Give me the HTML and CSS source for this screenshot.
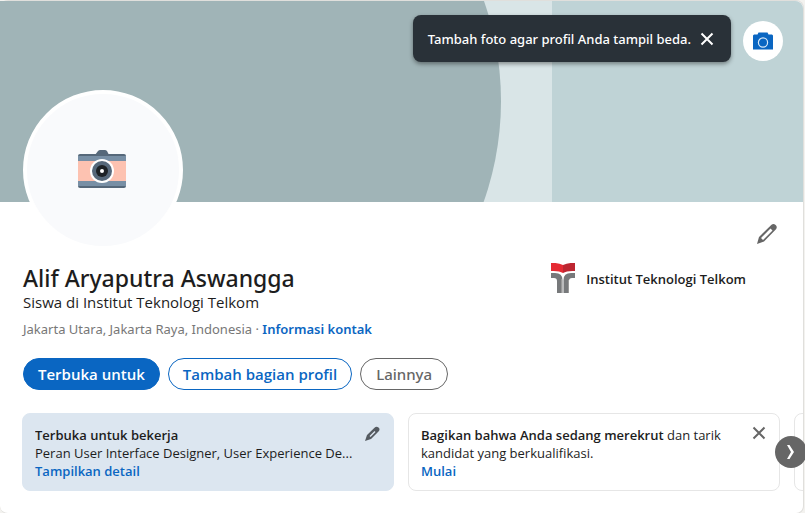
FILE: index.html
```html
<!DOCTYPE html>
<html lang="id">
<head>
<meta charset="utf-8">
<meta name="viewport" content="width=device-width, initial-scale=1">
<title>Alif Aryaputra Aswangga</title>
<link rel="stylesheet" href="styles.css">
</head>
<body>
<main class="card">
  <header class="cover">
    <svg class="cover-art" viewBox="0 0 803 201" preserveAspectRatio="xMidYMid slice" aria-hidden="true">
      <rect width="803" height="201" fill="#d9e5e7"/>
      <rect x="552" width="1000" height="201" fill="#bfd3d6"/>
      <circle cx="199" cy="100" r="302" fill="#a0b4b7"/>
      <rect x="-500" width="600" height="201" fill="#a0b4b7"/>
    </svg>
    <div class="cover-tools">
      <div class="tip" role="status">
        <span>Tambah foto agar profil Anda tampil beda.</span>
        <button class="icon-button" type="button" aria-label="Tutup">
          <svg width="14" height="14" viewBox="0 0 14 14"><path d="M1.5 1.5l11 11M12.5 1.5l-11 11" stroke="#fff" stroke-width="2" fill="none"/></svg>
        </button>
      </div>
      <button class="photo-button" type="button" aria-label="Ubah foto sampul">
        <svg width="20" height="18" viewBox="0 0 20 18"><path d="M0 3.500L1 2.500h3.500L5.500.5h9l1 2H19l1 1V17.500H0z" fill="#0a66c2"/><circle cx="10" cy="10.500" r="4.600" fill="none" stroke="#d8e8f7" stroke-width="1.200"/></svg>
      </button>
    </div>
  </header>

  <section class="profile">
    <div class="top-row">
      <button class="avatar" type="button" aria-label="Tambah foto profil">
        <svg width="48" height="38" viewBox="0 0 48 38">
          <path d="M17 5l3-4q1-1 2-1h5q1 0 2 1l2 4z" fill="#56687a"/>
          <rect y="4" width="48" height="34" rx="2" fill="#56687a"/>
          <rect y="6" width="48" height="30" fill="#788fa5"/>
          <rect y="11" width="48" height="20" fill="#fdc2b1"/>
          <circle cx="24" cy="21" r="12" fill="#fff"/>
          <circle cx="24" cy="21" r="10" fill="#56687a"/>
          <circle cx="24" cy="21" r="6" fill="#1d2226"/>
          <circle cx="24" cy="21" r="2" fill="#fff"/>
        </svg>
      </button>
      <button class="icon-button edit" type="button" aria-label="Edit profil">
        <svg width="22" height="22" viewBox="0 0 22 22"><path fill-rule="evenodd" d="M1 21L3 14 15.500 1.800Q17.500 0 19.600 2T20 6.200L8 18.500ZM5 15L14.500 5.500l2 2L7 17Z" fill="#666"/></svg>
      </button>
    </div>

    <div class="identity">
      <div class="person">
        <h1>Alif Aryaputra Aswangga</h1>
        <p class="headline">Siswa di Institut Teknologi Telkom</p>
        <p class="place">Jakarta Utara, Jakarta Raya, Indonesia · <a href="#kontak">Informasi kontak</a></p>
      </div>
      <a class="school" href="#sekolah">
        <svg width="24" height="31" viewBox="0 0 24 31" aria-hidden="true">
          <path d="M0 0Q7-.5 12 2v8Q8 7.500 0 8z" fill="#e52a33"/>
          <path d="M24 0Q17-.5 12 2v8Q16 7.500 24 8z" fill="#bd2631"/>
          <path d="M0 10h4q7.500 0 7.500 7V30H6V18q0-3-3-3H0z" fill="#77797b"/>
          <path d="M24 10h-4q-7.500 0-7.500 7V30H18V18q0-3 3-3h3z" fill="#77797b"/>
          <path d="M10.500 16v14M17.500 17v13" stroke="#999" stroke-width="1"/>
        </svg>
        <span>Institut Teknologi Telkom</span>
      </a>
    </div>

    <div class="actions">
      <button class="pill primary" type="button">Terbuka untuk</button>
      <button class="pill outline" type="button">Tambah bagian profil</button>
      <button class="pill muted" type="button">Lainnya</button>
    </div>
  </section>

  <section class="carousel">
    <div class="track">
      <article class="promo active">
        <div class="promo-text">
          <p class="clip"><strong>Terbuka untuk bekerja</strong></p>
          <p class="clip">Peran User Interface Designer, User Experience De...</p>
          <a href="#detail">Tampilkan detail</a>
        </div>
        <button class="icon-button" type="button" aria-label="Edit preferensi">
          <svg width="16" height="16" viewBox="0 0 16 16"><path fill-rule="evenodd" d="M1 15L3 9 10.500 1.700Q12.500 0 14.500 1.600T14.500 5.500L7 13ZM5.500 10L10.500 5l1 1L6.500 11Z" fill="#555b61"/></svg>
        </button>
      </article>
      <article class="promo">
        <div class="promo-text">
          <p><strong>Bagikan bahwa Anda sedang merekrut</strong> dan tarik kandidat yang berkualifikasi.</p>
          <a href="#mulai">Mulai</a>
        </div>
        <button class="icon-button" type="button" aria-label="Tutup">
          <svg width="14" height="14" viewBox="0 0 14 14"><path d="M1.500 1.500l11 11M12.500 1.500l-11 11" stroke="#666" stroke-width="2" fill="none"/></svg>
        </button>
      </article>
      <article class="promo"></article>
    </div>
    <button class="next" type="button" aria-label="Berikutnya">
      <svg width="8" height="14" viewBox="0 0 8 14"><path d="M0 0h2.500L7 7l-4.500 7H0l4-7z" fill="#fff"/></svg>
    </button>
  </section>
</main>
</body>
</html>
```
FILE: styles.css
```css
* { box-sizing: border-box; }
body {
  margin: 0;
  background: #f3f2ef;
  color: #1d1d1d;
  font: 13px/18px "Open Sans", "Noto Sans", sans-serif;
  overflow-x: hidden;
}
h1, p { margin: 0; }
button { font: inherit; cursor: pointer; }
a { color: #0a66c2; font-weight: 600; text-decoration: none; }
strong { font-weight: 600; }
svg { display: block; flex: none; }
.card {
  margin-right: 1px;
  padding-bottom: 22px;
  background: #fff;
  border: 1px solid #e0dfdc;
  border-left: 0;
  border-radius: 8px;
}
.cover {
  position: relative;
  height: 201px;
  border-radius: 0 8px 0 0;
  overflow: hidden;
}
.cover-art { position: absolute; inset: 0; width: 100%; height: 100%; }
.cover-tools {
  position: relative;
  display: flex;
  justify-content: flex-end;
  gap: 12px;
  padding: 14px 20px 0 0;
}
.tip {
  display: flex;
  align-items: center;
  gap: 9px;
  height: 47px;
  padding: 0 17px 0 15px;
  border-radius: 8px;
  background: #293138;
  color: #fff;
  font-family: "Noto Sans", "Open Sans", sans-serif;
  font-weight: 500;
  box-shadow: 0 2px 4px rgba(0, 0, 0, .4);
}
.icon-button { display: flex; flex: none; padding: 0; border: 0; background: none; }
.photo-button {
  display: flex;
  align-items: center;
  justify-content: center;
  width: 40px;
  height: 40px;
  margin-top: 6px;
  padding: 0;
  border: 0;
  border-radius: 50%;
  background: #fff;
}
.profile { padding: 0 25px 0 23px; }
.top-row { display: flex; justify-content: space-between; }
.avatar {
  position: relative;
  display: flex;
  align-items: center;
  justify-content: center;
  width: 160px;
  height: 160px;
  margin-top: -112px;
  padding: 0 2px 2px 0;
  border: 4px solid #fff;
  border-radius: 50%;
  background: #f9fafc;
}
.edit { margin-top: 21px; height: 22px; }
.identity { display: flex; justify-content: space-between; padding-top: 13px; }
h1 {
  font: 500 23px/30px "Noto Sans", "Open Sans", sans-serif;
}
.headline { font-size: 15px; line-height: 18px; }
.place {
  margin-top: 9px;
  color: #777;
  font-family: "Noto Sans", "Open Sans", sans-serif;
}
.school {
  display: flex;
  align-items: center;
  align-self: flex-start;
  gap: 11px;
  margin-right: 32px;
  color: #1d1d1d;
}
.actions { display: flex; gap: 8px; padding-top: 20px; }
.pill {
  height: 32px;
  padding: 0 14px;
  border: 1px solid #0a66c2;
  border-radius: 16px;
  background: #fff;
  color: #0a66c2;
  font-size: 15px;
  font-weight: 600;
}
.primary { background: #0a66c2; color: #fff; }
.muted {
  padding: 0 15px;
  border-color: #666;
  color: #666;
  font-family: "Noto Sans", "Open Sans", sans-serif;
  font-weight: 500;
}
.carousel { position: relative; padding: 23px 0 0 22px; }
.track { display: flex; gap: 14px; overflow: hidden; }
.promo {
  display: flex;
  flex: 0 0 372px;
  min-width: 0;
  justify-content: space-between;
  gap: 8px;
  height: 78px;
  padding: 12px 13px 0 12px;
  border: 1px solid #e6e6e6;
  border-radius: 8px;
}
.active { border-color: #dce6f0; background: #dce6f0; }
.promo-text { flex: 1; min-width: 0; }
.promo-text a { display: block; }
.clip { overflow: hidden; text-overflow: ellipsis; white-space: nowrap; }
.next {
  position: absolute;
  right: -4px;
  top: 46px;
  display: flex;
  align-items: center;
  justify-content: center;
  width: 32px;
  height: 32px;
  padding: 0;
  border: 0;
  border-radius: 50%;
  background: #666;
}
```
